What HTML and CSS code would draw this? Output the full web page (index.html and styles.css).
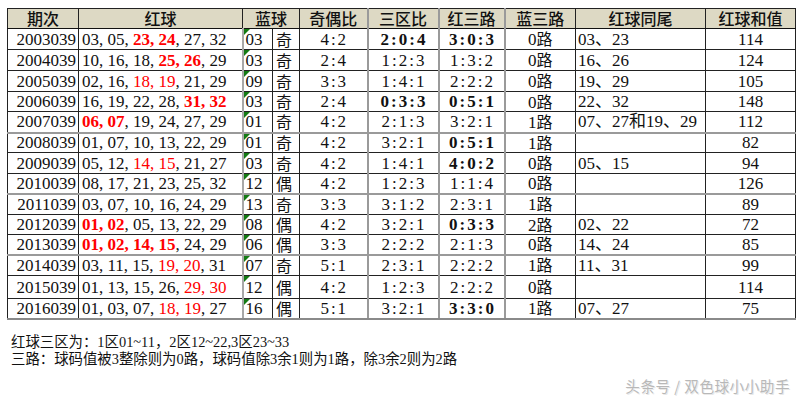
FILE: index.html
```html
<!DOCTYPE html>
<html lang="zh">
<head>
<meta charset="utf-8">
<link rel="stylesheet" href="styles.css">
</head>
<body>
<table class="lotto">
  <colgroup>
    <col class="c-issue"><col class="c-red"><col class="c-bnum"><col class="c-bodd"><col class="c-oe"><col class="c-zone"><col class="c-r3"><col class="c-b3"><col class="c-tail"><col class="c-sum">
  </colgroup>
  <thead>
    <tr class="head">
      <th>期次</th><th>红球</th><th colspan="2">蓝球</th><th>奇偶比</th><th class="g">三区比</th><th class="g">红三路</th><th>蓝三路</th><th>红球同尾</th><th>红球和值</th>
    </tr>
  </thead>
  <tbody>
    <tr class="h21"><td class="issue">2003039</td><td class="red">03, 05, <b class="r">23, 24</b>, 27, 32</td><td class="bn">03</td><td class="bo">奇</td><td class="rt">4:2</td><td class="rt g"><b>2:0:4</b></td><td class="rt g"><b>3:0:3</b></td><td class="ct">0<span class="cj">路</span></td><td class="tail">03、23</td><td class="ct">114</td></tr>
    <tr class="h21"><td class="issue">2004039</td><td class="red">10, 16, 18, <b class="r">25, 26</b>, 29</td><td class="bn">03</td><td class="bo">奇</td><td class="rt">2:4</td><td class="rt g">1:2:3</td><td class="rt g">1:3:2</td><td class="ct">0<span class="cj">路</span></td><td class="tail">16、26</td><td class="ct">124</td></tr>
    <tr class="h21"><td class="issue">2005039</td><td class="red">02, 16, <span class="r">18, 19</span>, 21, 29</td><td class="bn">09</td><td class="bo">奇</td><td class="rt">3:3</td><td class="rt g">1:4:1</td><td class="rt g">2:2:2</td><td class="ct">0<span class="cj">路</span></td><td class="tail">19、29</td><td class="ct">105</td></tr>
    <tr class="h20"><td class="issue">2006039</td><td class="red">16, 19, 22, 28, <b class="r">31, 32</b></td><td class="bn">03</td><td class="bo">奇</td><td class="rt">2:4</td><td class="rt g"><b>0:3:3</b></td><td class="rt g"><b>0:5:1</b></td><td class="ct">0<span class="cj">路</span></td><td class="tail">22、32</td><td class="ct">148</td></tr>
    <tr class="h21"><td class="issue">2007039</td><td class="red"><b class="r">06, 07</b>, 19, 24, 27, 29</td><td class="bn">01</td><td class="bo">奇</td><td class="rt">4:2</td><td class="rt g">2:1:3</td><td class="rt g">3:2:1</td><td class="ct">1<span class="cj">路</span></td><td class="tail">07、27和19、29</td><td class="ct">112</td></tr>
    <tr class="h20 grey-top"><td class="issue">2008039</td><td class="red">01, 07, 10, 13, 22, 29</td><td class="bn">01</td><td class="bo">奇</td><td class="rt">4:2</td><td class="rt g">3:2:1</td><td class="rt g"><b>0:5:1</b></td><td class="ct">1<span class="cj">路</span></td><td class="tail"></td><td class="ct">82</td></tr>
    <tr class="h21"><td class="issue">2009039</td><td class="red">05, 12, <span class="r">14, 15</span>, 21, 27</td><td class="bn">03</td><td class="bo">奇</td><td class="rt">4:2</td><td class="rt g">1:4:1</td><td class="rt g"><b>4:0:2</b></td><td class="ct">0<span class="cj">路</span></td><td class="tail">05、15</td><td class="ct">94</td></tr>
    <tr class="h20"><td class="issue">2010039</td><td class="red">08, 17, 21, 23, 25, 32</td><td class="bn">12</td><td class="bo">偶</td><td class="rt">4:2</td><td class="rt g">1:2:3</td><td class="rt g">1:1:4</td><td class="ct">0<span class="cj">路</span></td><td class="tail"></td><td class="ct">126</td></tr>
    <tr class="h21 grey-top"><td class="issue">2011039</td><td class="red">03, 07, 10, 16, 24, 29</td><td class="bn">13</td><td class="bo">奇</td><td class="rt">3:3</td><td class="rt g">3:1:2</td><td class="rt g">2:3:1</td><td class="ct">1<span class="cj">路</span></td><td class="tail"></td><td class="ct">89</td></tr>
    <tr class="h20"><td class="issue">2012039</td><td class="red"><b class="r">01, 02</b>, 05, 13, 22, 29</td><td class="bn">08</td><td class="bo">偶</td><td class="rt">4:2</td><td class="rt g">3:2:1</td><td class="rt g"><b>0:3:3</b></td><td class="ct">2<span class="cj">路</span></td><td class="tail">02、22</td><td class="ct">72</td></tr>
    <tr class="h20"><td class="issue">2013039</td><td class="red"><b class="r">01, 02, 14, 15</b>, 24, 29</td><td class="bn">06</td><td class="bo">偶</td><td class="rt">3:3</td><td class="rt g">2:2:2</td><td class="rt g">2:1:3</td><td class="ct">0<span class="cj">路</span></td><td class="tail">14、24</td><td class="ct">85</td></tr>
    <tr class="h21 grey-top"><td class="issue">2014039</td><td class="red">03, 11, 15, <span class="r">19, 20</span>, 31</td><td class="bn">07</td><td class="bo">奇</td><td class="rt">5:1</td><td class="rt g">2:3:1</td><td class="rt g">2:2:2</td><td class="ct">1<span class="cj">路</span></td><td class="tail">11、31</td><td class="ct">99</td></tr>
    <tr class="h23"><td class="issue">2015039</td><td class="red">01, 13, 15, 26, <span class="r">29, 30</span></td><td class="bn">12</td><td class="bo">偶</td><td class="rt">4:2</td><td class="rt g">1:2:3</td><td class="rt g">2:2:2</td><td class="ct">0<span class="cj">路</span></td><td class="tail"></td><td class="ct">114</td></tr>
    <tr class="h20 last"><td class="issue">2016039</td><td class="red">01, 03, 07, <span class="r">18, 19</span>, 27</td><td class="bn">16</td><td class="bo">偶</td><td class="rt">5:1</td><td class="rt g">3:2:1</td><td class="rt g"><b>3:3:0</b></td><td class="ct">1<span class="cj">路</span></td><td class="tail">07、27</td><td class="ct">75</td></tr>
  </tbody>
</table>
<div class="notes">
  <p>红球三区为：1区01~11，2区12~22,3区23~33</p>
  <p>三路：球码值被3整除则为0路，球码值除3余1则为1路，除3余2则为2路</p>
</div>
<div class="mark">头条号 / 双色球小小助手</div>
</body>
</html>
```

FILE: styles.css
```css
html, body {
  margin: 0;
  padding: 0;
  background: #ffffff;
}
body {
  width: 801px;
  height: 400px;
  position: relative;
  overflow: hidden;
  font-family: "Liberation Serif", "Noto Sans CJK SC", serif;
  color: #111;
}
.lotto {
  margin: 8px 0 0 7px;
  border-collapse: collapse;
  table-layout: fixed;
  width: 788px;
  font-size: 17px;
}
.c-issue { width: 71px; }
.c-red { width: 164px; }
.c-bnum { width: 30px; }
.c-bodd { width: 27px; }
.c-oe { width: 68px; }
.c-zone { width: 71px; }
.c-r3 { width: 66px; }
.c-b3 { width: 71px; }
.c-tail { width: 130px; }
.c-sum { width: 90px; }

.lotto th, .lotto td {
  border: 1px solid #222;
  padding: 0;
  white-space: nowrap;
  line-height: 15px;
  vertical-align: middle;
}
.head { height: 20px; }
.head th {
  background: #ddd9c4;
  font-family: "Noto Sans CJK SC", sans-serif;
  font-weight: 500;
  font-size: 16px;
  text-align: center;
  border-bottom: 1px solid #111;
}
.h20 { height: 20px; }
.h21 { height: 21px; }
.h23 { height: 23px; }
.grey-top td { border-top: 2px solid #9a9a9a; }
.last td { border-bottom: 2px solid #8a8a8a; }

.issue { text-align: right; padding-right: 2px !important; }
.red { text-align: left; padding-left: 3px !important; }
.r { color: #ff0000; }
b.r { font-weight: 700; }
.bn {
  position: relative;
  text-align: left;
  padding-left: 2px !important;
  border-left: 2px solid #a8a8a8 !important;
}
.bn::before {
  content: "";
  position: absolute;
  left: 0;
  top: 0;
  border-top: 6px solid #137a13;
  border-right: 6px solid transparent;
}
.bo {
  text-align: left;
  padding-left: 3px !important;
  font-family: "Noto Sans CJK SC", sans-serif;
  font-size: 16px;
}
.cj {
  font-family: "Noto Sans CJK SC", sans-serif;
  font-size: 16px;
}
.rt {
  text-align: center;
  letter-spacing: 2px;
  padding-left: 2px !important;
}
.rt b { font-weight: 700; }
.lotto .g { border-left: 2px solid #9a9a9a; border-right: 2px solid #9a9a9a; }
.ct { text-align: center; }
.tail { text-align: left; padding-left: 2px !important; }

.notes {
  margin: 14px 0 0 11px;
  font-size: 14.4px;
  line-height: 17px;
  color: #111;
}
.notes p { margin: 0; }

.mark {
  position: absolute;
  right: 11px;
  top: 375px;
  font-family: "Noto Sans CJK SC", sans-serif;
  font-size: 14.6px;
  color: #b8b8b8;
  text-shadow: 0 0 1px #ffffff, 1px 1px 0 #e6e6e6;
  letter-spacing: 0.5px;
}
```
